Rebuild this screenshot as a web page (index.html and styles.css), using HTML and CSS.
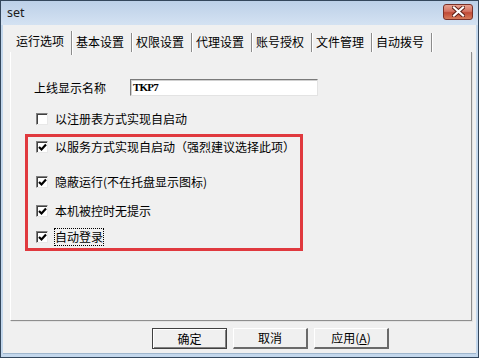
FILE: index.html
```html
<!DOCTYPE html>
<html lang="zh-CN">
<head>
<meta charset="utf-8">
<title>set</title>
<link rel="stylesheet" href="styles.css">
</head>
<body>
<div class="window">
  <div class="titlebar">
    <span class="title">set</span>
    <div class="close">
      <svg width="13" height="11" viewBox="0 0 13 11"><path d="M2 1.5 L11 9.5 M11 1.5 L2 9.5" stroke="#5a1c14" stroke-width="4" stroke-linecap="square"/><path d="M2 1.5 L11 9.5 M11 1.5 L2 9.5" stroke="#ffffff" stroke-width="2.2" stroke-linecap="square"/></svg>
    </div>
  </div>
  <div class="client">
    <div class="tabs">
      <div class="tab tab-active">运行选项</div>
      <div class="tab">基本设置</div>
      <div class="tab">权限设置</div>
      <div class="tab">代理设置</div>
      <div class="tab">账号授权</div>
      <div class="tab">文件管理</div>
      <div class="tab">自动拨号</div>
    </div>
    <div class="panel">
      <div class="name-row">
        <span class="name-label">上线显示名称</span>
        <div class="textbox">TKP7</div>
      </div>
      <div class="check-row first-check">
        <span class="checkbox"></span>
        <span class="check-label">以注册表方式实现自启动</span>
      </div>
      <div class="highlight">
        <div class="check-row r1">
          <span class="checkbox checked"><svg width="9" height="9" viewBox="0 0 9 9"><path d="M1 4 L3.5 6.5 L8 1.5" fill="none" stroke="#000" stroke-width="2.2"/></svg></span>
          <span class="check-label">以服务方式实现自启动（强烈建议选择此项）</span>
        </div>
        <div class="check-row r2">
          <span class="checkbox checked"><svg width="9" height="9" viewBox="0 0 9 9"><path d="M1 4 L3.5 6.5 L8 1.5" fill="none" stroke="#000" stroke-width="2.2"/></svg></span>
          <span class="check-label">隐蔽运行(不在托盘显示图标)</span>
        </div>
        <div class="check-row r3">
          <span class="checkbox checked"><svg width="9" height="9" viewBox="0 0 9 9"><path d="M1 4 L3.5 6.5 L8 1.5" fill="none" stroke="#000" stroke-width="2.2"/></svg></span>
          <span class="check-label">本机被控时无提示</span>
        </div>
        <div class="check-row r4">
          <span class="checkbox checked"><svg width="9" height="9" viewBox="0 0 9 9"><path d="M1 4 L3.5 6.5 L8 1.5" fill="none" stroke="#000" stroke-width="2.2"/></svg></span>
          <span class="check-label focused">自动登录</span>
        </div>
      </div>
    </div>
    <div class="buttons">
      <div class="btn btn-default">确定</div>
      <div class="btn">取消</div>
      <div class="btn">应用(<u>A</u>)</div>
    </div>
  </div>
</div>
</body>
</html>
```

FILE: styles.css
```css
* { box-sizing: border-box; }
html, body { margin: 0; padding: 0; }
body {
  font-family: "Noto Sans CJK SC", "Noto Sans", sans-serif;
  font-size: 12px;
  color: #000;
  background: #f0f0f0;
}
.window {
  width: 479px;
  height: 358px;
  border: 1px solid #34475c;
  background: #c3d7ec;
  display: flex;
  flex-direction: column;
  padding: 0 2px 3px 2px;
}
.titlebar {
  height: 24px;
  flex: none;
  display: flex;
  align-items: center;
  justify-content: space-between;
  background: linear-gradient(#bcd0e8, #d4e2f2);
  margin: 0 -2px;
  padding: 0 5px 0 6px;
}
.title {
  font-family: "Noto Sans", "DejaVu Sans", sans-serif;
  font-size: 12.5px;
  color: #1b1b1b;
  margin-top: -2px;
}
.close {
  width: 30px;
  height: 16px;
  margin-top: -3px;
  border: 1px solid #7a3028;
  border-radius: 3px;
  background: linear-gradient(#e8a190 0%, #d47363 45%, #c04a36 55%, #d67a5a 100%);
  display: flex;
  align-items: center;
  justify-content: center;
}
.client {
  flex: 1;
  background: #f0f0f0;
  padding: 6px 4px 0 7px;
  display: flex;
  flex-direction: column;
  border-bottom: 1px solid #9fb6cd;
}
.tabs {
  display: flex;
  height: 21px;
  align-items: flex-end;
}
.tab {
  height: 19px;
  line-height: 17px;
  padding: 0 7px 0 4px;
  border-right: 1px solid #8c8c8c;
  box-shadow: 1px 0 0 #ffffff;
  color: #000;
}
.tab-active {
  padding-left: 6px;
  margin-bottom: -3px;
  height: 24px;
  line-height: 20px;
}
.panel {
  height: 269px;
  border-right: 1px solid #8e8e8e;
  border-bottom: 1px solid #8e8e8e;
  border-left: 1px solid #ffffff;
  box-shadow: 1px 1px 0 #e3e3e3;
  display: flex;
  flex-direction: column;
}
.name-row {
  display: flex;
  align-items: center;
  margin: 27px 0 0 23px;
  height: 17px;
}
.name-label {
  width: 96px;
}
.textbox {
  width: 188px;
  height: 17px;
  background: #ffffff;
  border-top: 1px solid #7a7a7a;
  border-left: 1px solid #7a7a7a;
  border-right: 1px solid #e3e3e3;
  border-bottom: 1px solid #e3e3e3;
  box-shadow: inset 1px 1px 0 #d0d0d0;
  font-family: "Liberation Serif", serif;
  font-weight: bold;
  font-size: 11px;
  line-height: 15px;
  padding-left: 2px;
  letter-spacing: -0.8px;
}
.check-row {
  display: flex;
  align-items: center;
  height: 16px;
}
.first-check {
  margin: 15px 0 0 25px;
}
.checkbox {
  width: 12px;
  height: 12px;
  flex: none;
  background: #ffffff;
  border-top: 1px solid #808080;
  border-left: 1px solid #808080;
  border-right: 1px solid #e8e8e8;
  border-bottom: 1px solid #e8e8e8;
  box-shadow: inset 1px 1px 0 #404040;
  display: flex;
  align-items: center;
  justify-content: center;
  margin-right: 7px;
}
.checkbox svg { margin: 1px 0 0 1px; }
.check-label { line-height: 16px; }
.focused {
  outline: 1px dotted #000;
  outline-offset: 0;
}
.highlight {
  margin: 7px 0 0 14px;
  width: 278px;
  height: 117px;
  border: 3px solid #e0393e;
  padding: 2px 0 0 8px;
  display: flex;
  flex-direction: column;
}
.r2 { margin-top: 19px; }
.r3 { margin-top: 13px; }
.r4 { margin-top: 10px; }
.buttons {
  display: flex;
  gap: 6px;
  margin: 7px 0 0 142px;
}
.btn {
  width: 75px;
  height: 21px;
  line-height: 18px;
  text-align: center;
  background: #f0f0f0;
  border-top: 1px solid #ffffff;
  border-left: 1px solid #ffffff;
  border-right: 2px solid #6a6a6a;
  border-bottom: 2px solid #6a6a6a;
}
.btn-default {
  border: 1px solid #404040;
  box-shadow: inset 1px 1px 0 #ffffff, inset -1px -1px 0 #808080;
  line-height: 19px;
}
.btn u { text-decoration: underline; }
```
